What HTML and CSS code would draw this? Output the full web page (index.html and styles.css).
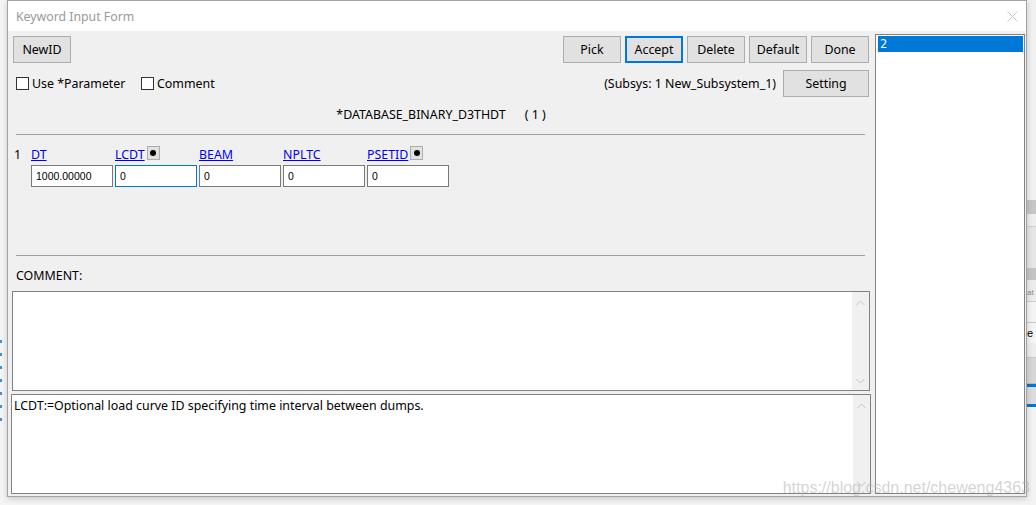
FILE: index.html
```html
<!DOCTYPE html>
<html>
<head>
<meta charset="utf-8">
<title>Keyword Input Form</title>
<link rel="stylesheet" href="styles.css">
</head>
<body>
<div class="desk">
  <div class="edge-left">
    <span class="dot"></span><span class="dot"></span><span class="dot"></span><span class="dot"></span><span class="dot"></span><span class="dot"></span><span class="dot"></span>
  </div>
  <div class="window">
    <div class="titlebar">
      <span class="title">Keyword Input Form</span>
      <svg class="close" width="11" height="11" viewBox="0 0 11 11"><path d="M0.5 0.5 L10.5 10.5 M10.5 0.5 L0.5 10.5" stroke="#c9c9c9" stroke-width="1" fill="none"/></svg>
    </div>
    <div class="client">
      <div class="panel">
        <div class="toolbar">
          <button class="btn">NewID</button>
          <div class="btn-group">
            <button class="btn">Pick</button>
            <button class="btn accent">Accept</button>
            <button class="btn">Delete</button>
            <button class="btn">Default</button>
            <button class="btn">Done</button>
          </div>
        </div>
        <div class="optrow">
          <label class="check first"><span class="box"></span>Use *Parameter</label>
          <label class="check"><span class="box"></span>Comment</label>
          <span class="subsys">(Subsys: 1 New_Subsystem_1)</span>
          <button class="btn wide">Setting</button>
        </div>
        <div class="kw-title">*DATABASE_BINARY_D3THDT<span class="kw-count">( 1 )</span></div>
        <div class="sep"></div>
        <div class="card">
          <span class="card-no">1</span>
          <span class="field-label"><a href="#">DT</a></span>
          <span class="field-label"><a href="#">LCDT</a><span class="pick"><span class="pick-dot"></span></span></span>
          <span class="field-label"><a href="#">BEAM</a></span>
          <span class="field-label"><a href="#">NPLTC</a></span>
          <span class="field-label"><a href="#">PSETID</a><span class="pick"><span class="pick-dot"></span></span></span>
          <span></span>
          <span class="field">1000.00000</span>
          <span class="field focus">0</span>
          <span class="field">0</span>
          <span class="field">0</span>
          <span class="field">0</span>
        </div>
        <div class="sep sep-lower"></div>
        <div class="comment-label">COMMENT:</div>
        <div class="memo memo-comment">
          <div class="memo-text"></div>
          <div class="vscroll">
            <svg width="9" height="6" viewBox="0 0 9 6"><polyline points="0.5,5 4.5,1 8.5,5" fill="none" stroke="#c2c2c2" stroke-width="1"/></svg>
            <svg width="9" height="6" viewBox="0 0 9 6"><polyline points="0.5,1 4.5,5 8.5,1" fill="none" stroke="#c2c2c2" stroke-width="1"/></svg>
          </div>
        </div>
        <div class="memo memo-help">
          <div class="memo-text">LCDT:=Optional load curve ID specifying time interval between dumps.</div>
          <div class="vscroll">
            <svg width="9" height="6" viewBox="0 0 9 6"><polyline points="0.5,5 4.5,1 8.5,5" fill="none" stroke="#c2c2c2" stroke-width="1"/></svg>
            <svg width="9" height="6" viewBox="0 0 9 6"><polyline points="0.5,1 4.5,5 8.5,1" fill="none" stroke="#c2c2c2" stroke-width="1"/></svg>
          </div>
        </div>
      </div>
      <div class="listbox">
        <div class="item selected">2</div>
      </div>
    </div>
    <div class="watermark">https://blog.csdn.net/cheweng4363</div>
  </div>
  <div class="edge-right">
    <div class="seg s1"></div>
    <div class="seg s2"></div>
    <div class="seg s3"></div>
    <div class="seg s4"></div>
    <div class="seg s5"></div>
    <div class="seg s6">at</div>
    <div class="seg s7"></div>
    <div class="seg s8">e</div>
    <div class="seg s9"></div>
    <div class="seg s10"></div>
    <div class="seg s11"></div>
    <div class="seg s12"></div>
    <div class="seg s13"></div>
  </div>
</div>
</body>
</html>
```
FILE: styles.css
```css
html, body {
  margin: 0;
  padding: 0;
}
body {
  background: #f5f5f5;
  font-family: "Noto Sans", "Open Sans", "Liberation Sans", sans-serif;
  font-size: 12.4px;
  color: #000;
}
.desk {
  display: flex;
  width: 1036px;
  height: 505px;
  overflow: hidden;
}
.edge-left {
  width: 7px;
  flex: none;
  display: flex;
  flex-direction: column;
  align-items: flex-start;
  gap: 10px;
  padding-top: 340px;
  box-sizing: border-box;
}
.dot {
  display: block;
  width: 2px;
  height: 3px;
  background: #3d8fd6;
}
.window {
  position: relative;
  width: 1020px;
  height: 497px;
  flex: none;
  box-sizing: border-box;
  border: 1px solid #a3a3a3;
  background: #f0f0f0;
  box-shadow: 0 2px 6px rgba(0, 0, 0, 0.18);
  display: flex;
  flex-direction: column;
  z-index: 1;
}
.titlebar {
  height: 30px;
  flex: none;
  background: #fff;
  display: flex;
  align-items: center;
  justify-content: space-between;
  padding: 0 8px 0 8px;
}
.title {
  font-size: 12.3px;
  color: #999;
}
.close {
  display: block;
  margin-top: 1px;
}
.client {
  flex: 1;
  display: flex;
  min-height: 0;
}
.panel {
  width: 865px;
  flex: none;
  box-sizing: border-box;
  padding: 5px 4px 0 5px;
  display: flex;
  flex-direction: column;
}
.btn {
  height: 27px;
  width: 58px;
  box-sizing: border-box;
  padding: 0;
  margin: 0;
  background: #e1e1e1;
  border: 1px solid #adadad;
  font-family: inherit;
  font-size: 12.4px;
  color: #000;
}
.btn.accent {
  border: 2px solid #0078d7;
}
.btn.wide {
  width: 86px;
  margin-left: 7px;
}
.toolbar {
  display: flex;
  justify-content: space-between;
}
.btn-group {
  display: flex;
  gap: 4px;
}
.optrow {
  display: flex;
  align-items: center;
  margin-top: 7px;
}
.check {
  display: flex;
  align-items: center;
  gap: 3px;
}
.check.first {
  margin-left: 3px;
  width: 125px;
}
.box {
  width: 13px;
  height: 13px;
  box-sizing: border-box;
  border: 1px solid #333;
  background: #fff;
}
.subsys {
  margin-left: auto;
}
.kw-title {
  margin-top: 10px;
  line-height: 16px;
  text-align: center;
}
.kw-count {
  margin-left: 19px;
}
.sep {
  height: 0;
  border-top: 1px solid #a0a0a0;
  margin: 11px 4px 0 3px;
}
.sep-lower {
  margin-top: 68px;
}
.card {
  display: grid;
  grid-template-columns: 15px repeat(5, 82px);
  grid-template-rows: 14px 22px;
  column-gap: 2px;
  row-gap: 5px;
  margin: 11px 0 0 1px;
}
.card-no {
  line-height: 14px;
  margin-top: 2px;
}
.field-label {
  display: flex;
  align-items: flex-start;
  gap: 2px;
  line-height: 14px;
}
.field-label a {
  color: #0000ee;
  text-decoration: underline;
  padding-top: 2px;
}
.pick {
  width: 13px;
  height: 14px;
  flex: none;
  box-sizing: border-box;
  border: 1px solid #adadad;
  background: #e1e1e1;
  display: flex;
  align-items: center;
  justify-content: center;
}
.pick-dot {
  width: 6px;
  height: 6px;
  border-radius: 50%;
  background: #000;
}
.field {
  box-sizing: border-box;
  height: 22px;
  border: 1px solid #7a7a7a;
  background: #fff;
  padding-left: 4px;
  font-family: "Liberation Sans", Arial, sans-serif;
  font-size: 10.5px;
  line-height: 20px;
}
.field.focus {
  border-color: #0078d7;
}
.comment-label {
  margin: 12px 0 0 3px;
  line-height: 16px;
}
.memo {
  display: flex;
  box-sizing: border-box;
  height: 100px;
  border: 1px solid #828282;
  background: #fff;
}
.memo-comment {
  margin: 7px -1px 0 -1px;
}
.memo-help {
  margin: 3px -2px 0 -2px;
}
.memo-text {
  flex: 1;
  padding: 3px 2px 0 2px;
  line-height: 16px;
}
.vscroll {
  width: 17px;
  flex: none;
  background: #f0f0f0;
  display: flex;
  flex-direction: column;
  align-items: center;
  justify-content: space-between;
  padding: 8px 0 6px 0;
}
.vscroll svg {
  display: block;
}
.listbox {
  width: 150px;
  height: 460px;
  flex: none;
  box-sizing: border-box;
  margin: 3px 1px 0 2px;
  border: 1px solid #828282;
  background: #fff;
  padding: 1px 1px 0 2px;
}
.item {
  height: 16px;
  line-height: 16px;
  padding-left: 2px;
  font-family: "DejaVu Sans Mono", monospace;
  font-size: 12px;
}
.item.selected {
  background: #0078d7;
  color: #fff;
}
.watermark {
  position: absolute;
  right: -4px;
  bottom: -1px;
  font-family: "Liberation Sans", Arial, sans-serif;
  font-size: 16px;
  color: rgba(175, 175, 175, 0.55);
  white-space: nowrap;
  pointer-events: none;
}
.edge-right {
  width: 9px;
  flex: none;
  display: flex;
  flex-direction: column;
  overflow: hidden;
  background: #f3f3f3;
}
.seg {
  flex: none;
  font-family: "Liberation Sans", Arial, sans-serif;
  white-space: nowrap;
}
.s1 { height: 200px; background: #f1f1f1; }
.s2 { height: 14px; background: #c6c6c6; }
.s3 { height: 12px; background: #eeeeee; border-bottom: 1px solid #d0d0d0; }
.s4 { height: 41px; background: #e6e6e6; }
.s5 { height: 12px; background: #c4c4c4; }
.s6 { height: 22px; background: #ececec; color: #8a8a8a; font-size: 8px; line-height: 10px; padding-top: 8px; box-sizing: border-box; border-bottom: 1px solid #d0d0d0; }
.s7 { height: 20px; background: #f4f4f4; border-bottom: 1px solid #c8c8c8; }
.s8 { height: 20px; background: #f4f4f4; color: #000; font-size: 11px; line-height: 12px; padding-top: 4px; box-sizing: border-box; }
.s9 { height: 14px; background: #ededed; border-bottom: 1px solid #c8c8c8; }
.s10 { height: 25px; background: #d6d6d6; border-bottom: 1px solid #bdbdbd; }
.s11 { height: 3px; background: #0078d7; }
.s12 { height: 17px; background: #dcdcdc; }
.s13 { height: 3px; background: #0078d7; }
```
